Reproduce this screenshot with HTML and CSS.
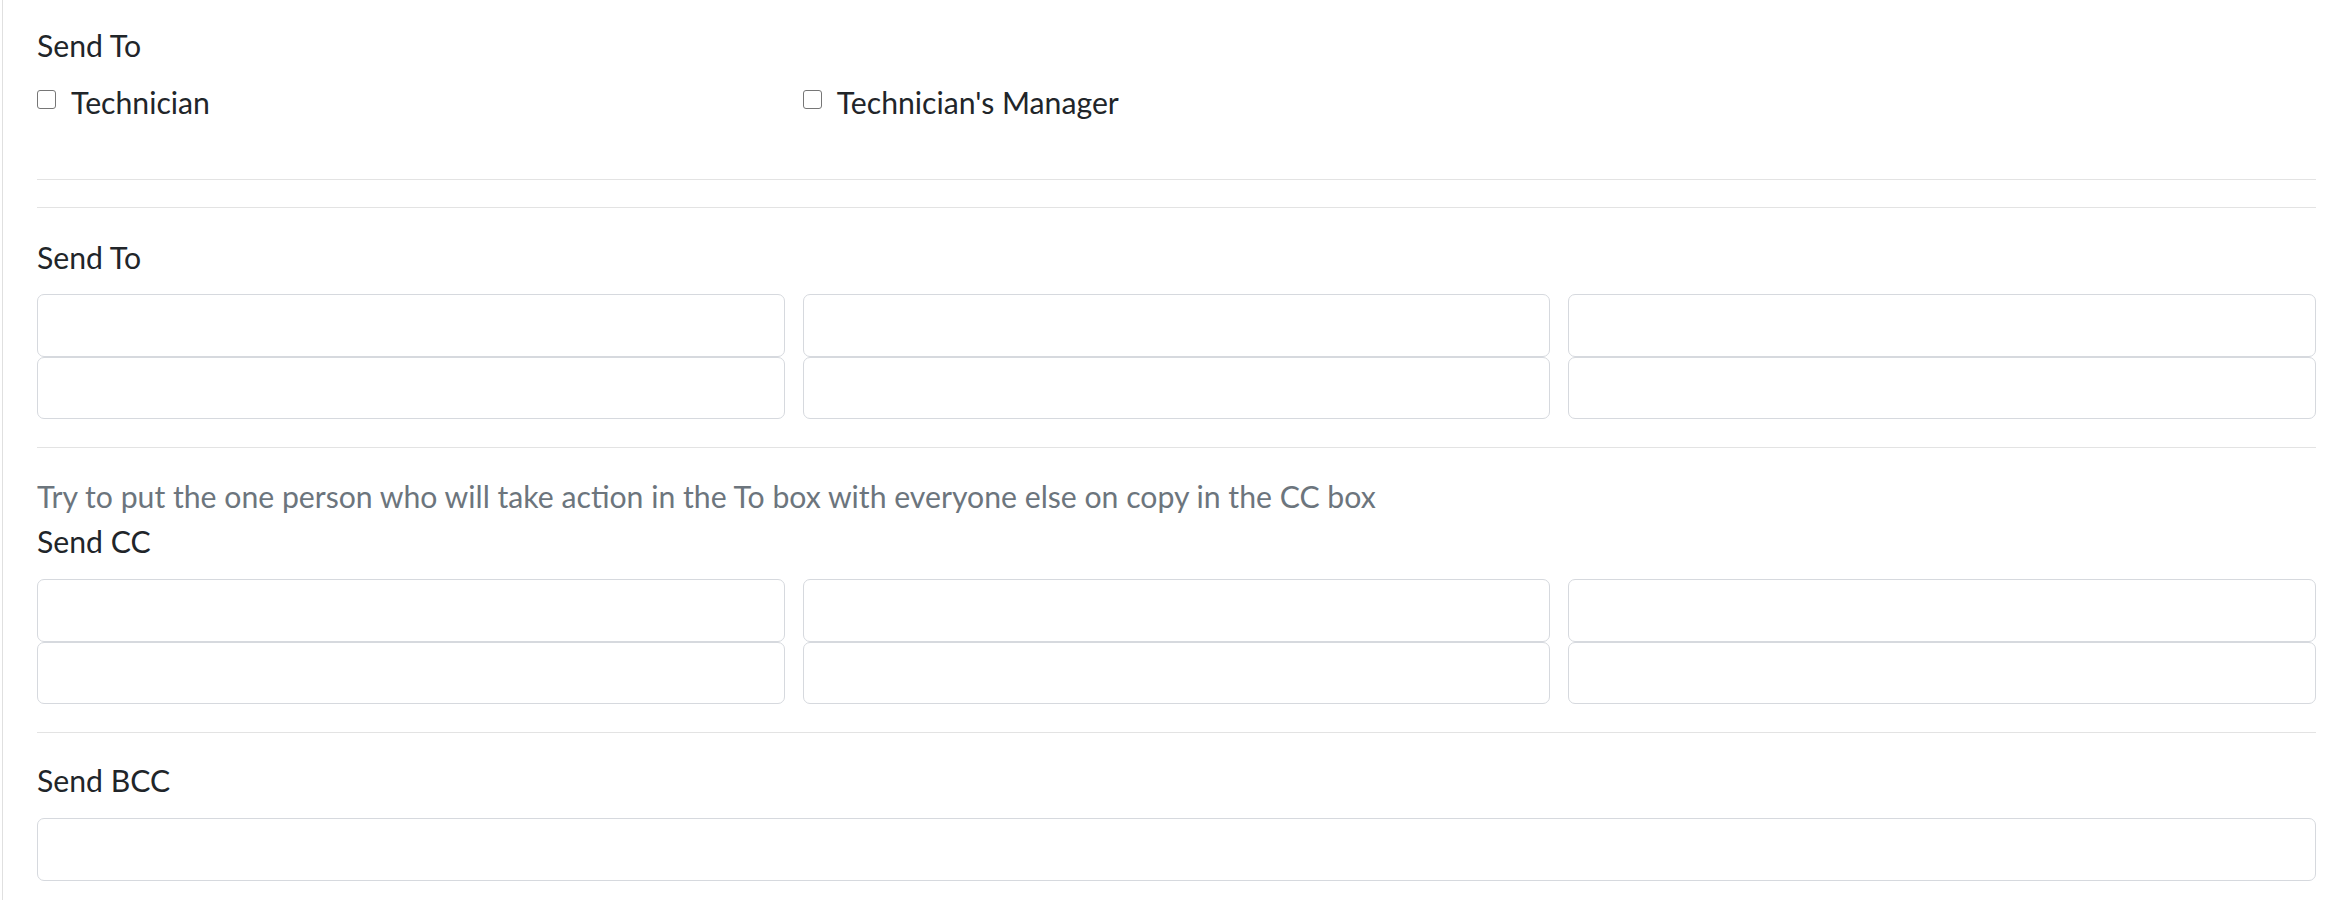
FILE: index.html
```html
<!DOCTYPE html>
<html lang="en">
<head>
    <meta charset="UTF-8">
    <title>Email Recipients</title>
    <link rel="stylesheet" href="styles.css">
</head>
<body>
    <div class="panel">
        <div class="send-top">
            <label class="field-label">Send To</label>
            <div class="grid checks">
                <label class="check"><input type="checkbox"> <span>Technician</span></label>
                <label class="check"><input type="checkbox"> <span>Technician's Manager</span></label>
            </div>
        </div>

        <hr class="rule rule-first">
        <hr class="rule rule-second">

        <div class="block block-to">
            <label class="field-label">Send To</label>
            <div class="grid">
                <input type="text" class="box">
                <input type="text" class="box">
                <input type="text" class="box">
                <input type="text" class="box">
                <input type="text" class="box">
                <input type="text" class="box">
            </div>
        </div>

        <hr class="rule">

        <div class="block block-cc">
            <div class="hint">Try to put the one person who will take action in the To box with everyone else on copy in the CC box</div>
            <label class="field-label">Send CC</label>
            <div class="grid">
                <input type="text" class="box">
                <input type="text" class="box">
                <input type="text" class="box">
                <input type="text" class="box">
                <input type="text" class="box">
                <input type="text" class="box">
            </div>
        </div>

        <hr class="rule">

        <div class="block block-bcc">
            <label class="field-label">Send BCC</label>
            <input type="text" class="box box-wide">
        </div>
    </div>
</body>
</html>
```

FILE: styles.css
```css
body {
    margin: 0;
    background: #fff;
    font-family: Lato, "Noto Sans", sans-serif;
    font-size: 30.2px;
    line-height: 45px;
    color: #212529;
}
.panel {
    box-sizing: border-box;
    margin-left: 2px;
    border-left: 1px solid #e0e0e0;
    padding: 23px 23px 0 34px;
    height: 900px;
    overflow: hidden;
}
.field-label {
    display: block;
}
.grid {
    display: grid;
    grid-template-columns: repeat(3, 1fr);
    column-gap: 18px;
}
.checks {
    margin-top: 12px;
}
.check {
    display: flex;
    align-items: flex-start;
}
.check input {
    appearance: none;
    width: 19px;
    height: 19px;
    margin: 10px 15px 0 0;
    border: 1.5px solid #767676;
    border-radius: 3px;
    background: #fff;
    flex-shrink: 0;
}
.rule {
    border: none;
    border-top: 1px solid #e3e3e3;
    margin: 0;
}
.rule-first {
    margin-top: 54px;
}
.rule-second {
    margin-top: 27px;
}
.block {
    padding-top: 27px;
    padding-bottom: 28px;
}
.block-to .grid {
    margin-top: 14px;
}
.block-cc {
    padding-top: 26px;
}
.block-cc .grid {
    margin-top: 15px;
}
.block-bcc {
    padding-top: 25px;
    padding-bottom: 0;
}
.hint {
    color: #6c757d;
}
.box {
    display: block;
    box-sizing: border-box;
    width: 100%;
    height: 62.5px;
    margin: 0;
    padding: 0 18px;
    border: 1.5px solid #d6d9de;
    border-radius: 7px;
    background: #fff;
    font: inherit;
}
.box-wide {
    margin-top: 15px;
}
```
